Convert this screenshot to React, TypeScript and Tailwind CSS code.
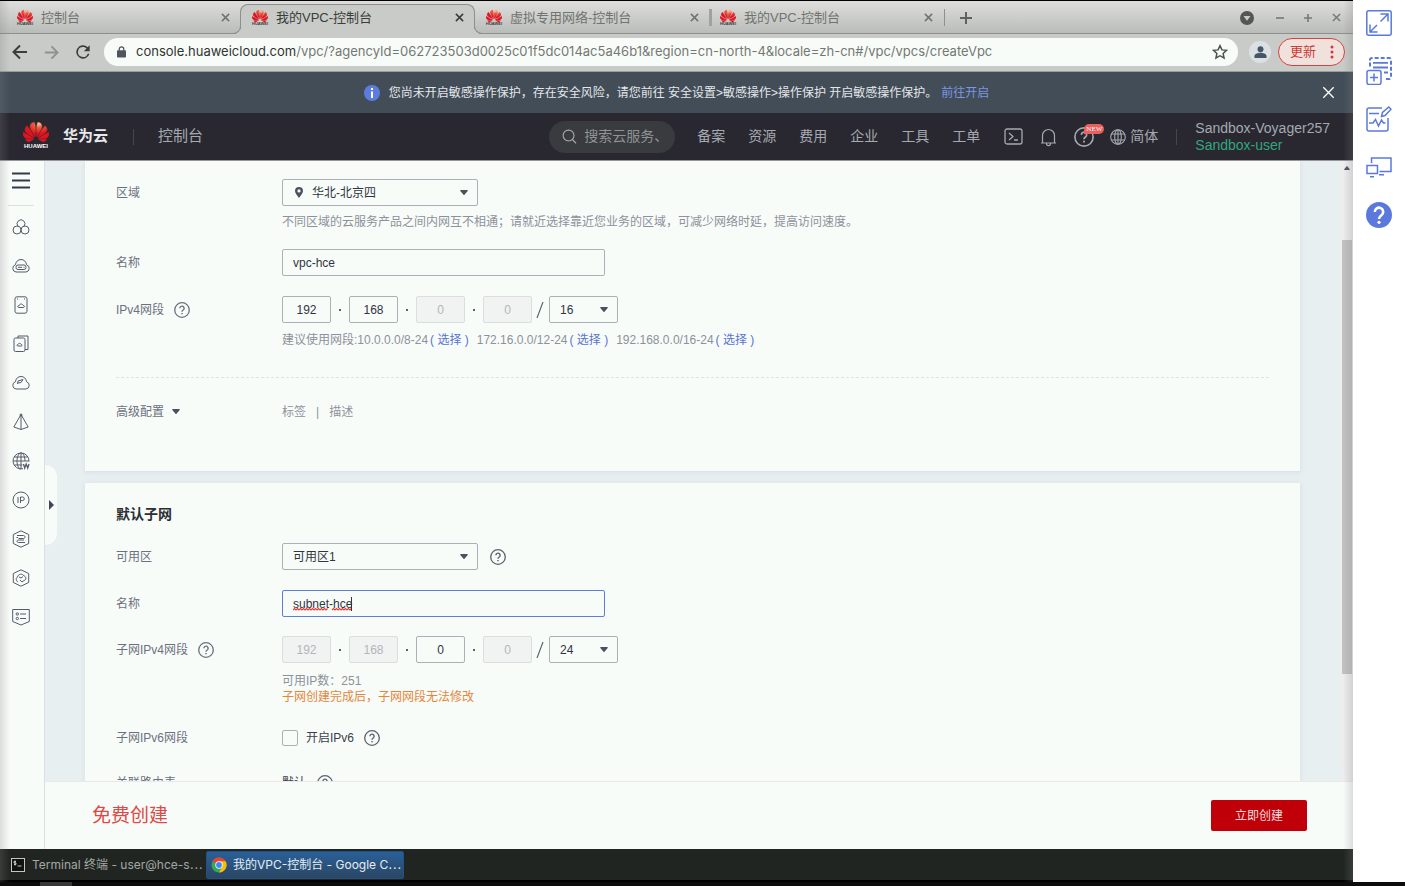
import React from "react";
import { SiHuawei } from "react-icons/si";

const inputBase =
  "h-[27px] rounded-[2px] border text-[12px] outline-none";

function Logo({ size }: { size: "sm" | "lg" }) {
  const large = size === "lg";
  return (
    <span className="flex shrink-0 flex-col items-center">
      <svg width="0" height="0" className="absolute">
        <defs>
          <radialGradient id={"petal-" + size} cx="0.6" cy="0.08" r="0.5">
            <stop offset="0" stopColor="#ffc49a" />
            <stop offset="0.4" stopColor="#ee5a40" />
            <stop offset="1" stopColor="#df1420" />
          </radialGradient>
        </defs>
      </svg>
      <SiHuawei
        fill={"url(#petal-" + size + ")"}
        stroke={"url(#petal-" + size + ")"}
        strokeWidth="0.3"
        className={large ? "h-[26px] w-[26px] -mt-1" : "h-4 w-4 -mt-[2px]"}
      />
      <span className={large ? "-mt-[2px] text-[6px] leading-[7px] font-bold text-white" : "-mt-[2px] text-[4px] leading-[4px] font-bold text-[#3a3a3a]"}>
        HUAWEI
      </span>
    </span>
  );
}

function Cross({ className, w = 1.7 }: { className: string; w?: number }) {
  return (
    <svg viewBox="0 0 10 10" className={className} fill="none" stroke="currentColor" strokeWidth={w}>
      <path d="M1 1 9 9M9 1 1 9" />
    </svg>
  );
}

function TabBody({ title }: { title: string }) {
  return (
    <>
      <Logo size="sm" />
      <span className="ml-2 flex-1 truncate">{title}</span>
      <button aria-label={"关闭 " + title} className="p-1">
        <Cross className="h-[9px] w-[9px]" />
      </button>
    </>
  );
}

function TabStrip() {
  return (
    <div className="flex h-[33px] shrink-0 items-stretch bg-linear-to-b from-[#dedfdd] to-[#b9bbb8] text-[13px] text-[#70736f] shadow-[inset_0_-1px_0_#8d908c]">
      <div className="flex w-60 min-w-0 items-center pr-[6px] pl-[17px]">
        <TabBody title="控制台" />
      </div>
      <div className="relative mt-[3px] flex w-[235px] min-w-0 items-center rounded-t-lg border border-b-0 border-[#8d908c] bg-[#c8cbc7] pr-[6px] pb-1 pl-[11px] text-[#3b3d3b] before:absolute before:bottom-0 before:-left-2 before:h-2 before:w-2 before:rounded-br-lg before:border-r before:border-b before:border-[#8d908c] before:shadow-[3px_3px_0_#c8cbc7] before:[clip-path:inset(0)] after:absolute after:-right-2 after:bottom-0 after:h-2 after:w-2 after:rounded-bl-lg after:border-b after:border-l after:border-[#8d908c] after:shadow-[-3px_3px_0_#c8cbc7] after:[clip-path:inset(0)]">
        <TabBody title="我的VPC-控制台" />
      </div>
      <div className="flex w-[234px] min-w-0 items-center pr-[6px] pl-[11px]">
        <TabBody title="虚拟专用网络-控制台" />
      </div>
      <span className="my-2 w-[3px] shrink-0 bg-[#9fa29e]" />
      <div className="flex w-[232px] min-w-0 items-center pr-[7px] pl-2">
        <TabBody title="我的VPC-控制台" />
      </div>
      <span className="my-2 w-px shrink-0 bg-[#8d908c]" />
      <button aria-label="新标签页" className="px-[15px]">
        <svg viewBox="0 0 12 12" className="h-3 w-3" stroke="#5f625f" strokeWidth="2">
          <path d="M6 0V12M0 6H12" />
        </svg>
      </button>
      <div className="ml-auto flex items-center pr-2 text-[#757874]">
        <button aria-label="搜索标签页" className="mr-[22px]">
          <svg viewBox="0 0 14 14" className="h-[14px] w-[14px]">
            <circle cx="7" cy="7" r="7" fill="#535653" />
            <path d="M3.5 5h7L7 9.8z" fill="#c9cbc8" />
          </svg>
        </button>
        <button aria-label="最小化" className="mr-5">
          <svg viewBox="0 0 8 8" className="h-2 w-2" stroke="currentColor" strokeWidth="1.6"><path d="M0 4H8" /></svg>
        </button>
        <button aria-label="最大化" className="mr-5">
          <svg viewBox="0 0 8 8" className="h-2 w-2" stroke="currentColor" strokeWidth="1.6"><path d="M0 4H8M4 0V8" /></svg>
        </button>
        <button aria-label="关闭窗口" className="mr-1">
          <Cross className="h-[9px] w-[9px]" w={1.6} />
        </button>
      </div>
    </div>
  );
}

function Toolbar() {
  return (
    <div className="flex h-[38px] shrink-0 items-center border-b border-[#9a9d99] bg-[#c8cbc7] pr-2 pb-px pl-3 text-[#3a3d3a]">
      <button aria-label="后退">
        <svg viewBox="0 0 16 16" className="h-4 w-4" fill="none" stroke="currentColor" strokeWidth="2"><path d="M15 8H2M8 1.5 1.5 8 8 14.500" /></svg>
      </button>
      <button aria-label="前进" className="ml-4 text-[#8f928f]">
        <svg viewBox="0 0 16 16" className="h-[15px] w-[15px]" fill="none" stroke="currentColor" strokeWidth="2"><path d="M1 8h13M8 1.500 14.500 8 8 14.500" /></svg>
      </button>
      <button aria-label="重新加载" className="mr-[11px] ml-[14px]">
        <svg viewBox="0 0 24 24" className="h-5 w-5" fill="currentColor"><path d="M17.650 6.350A8 8 0 1 0 19.730 14h-2.080A6 6 0 1 1 12 6c1.660 0 3.140.69 4.220 1.780L13 11h7V4z" /></svg>
      </button>
      <div className="flex h-7 min-w-0 flex-1 items-center rounded-full bg-[#f8fcf8] pr-[10px] pl-[13px]">
        <svg viewBox="0 0 10 13" className="h-[12px] w-[9px] shrink-0 text-[#50545c]">
          <rect x="0" y="4.500" width="10" height="8" rx="1" fill="currentColor" />
          <path d="M2.500 5V3.200a2.500 2.500 0 0 1 5 0V5" fill="none" stroke="currentColor" strokeWidth="1.400" />
        </svg>
        <span className="ml-[10px] flex-1 truncate font-['Inter','Noto_Sans_CJK_SC',sans-serif] text-[13px] text-[#747874]">
          <span className="text-[#303330]">console.huaweicloud.com</span>
          /vpc/?agencyId=062723503d0025c01f5dc014ac5a46b1&amp;region=cn-north-4&amp;locale=zh-cn#/vpc/vpcs/createVpc
        </span>
        <button aria-label="收藏">
          <svg viewBox="0 0 24 24" className="h-4 w-4" fill="none" stroke="#4c504c" strokeWidth="2.200"><path d="m12 2.500 2.900 6.300 6.900.7-5.100 4.700 1.400 6.800-6.100-3.400L5.900 21l1.400-6.800-5.100-4.700 6.900-.7z" /></svg>
        </button>
      </div>
      <button aria-label="用户" className="ml-[11px] flex h-[22px] w-[22px] items-center justify-center rounded-full bg-[#dbe1e2]">
        <svg viewBox="0 0 14 14" className="h-[13px] w-[13px]" fill="#475569"><circle cx="7" cy="3.500" r="3.200" /><path d="M0.500 13V11c0-2.500 4-3.600 6.500-3.600s6.500 1.100 6.500 3.600v2z" /></svg>
      </button>
      <button className="ml-[7px] flex h-7 w-[67px] items-center justify-between rounded-full border border-[#d5433c] bg-[#f0e1dd] pr-[10px] pl-[11px] text-[13px] text-[#ce3a34]">
        更新
        <svg viewBox="0 0 4 14" className="h-[14px] w-1" fill="currentColor"><circle cx="2" cy="2" r="1.500" /><circle cx="2" cy="7" r="1.500" /><circle cx="2" cy="12" r="1.500" /></svg>
      </button>
    </div>
  );
}

function Notice() {
  return (
    <div className="relative flex h-[41px] shrink-0 items-center justify-center bg-[#424d58] text-[12px] text-[#e4e7e9]">
      <svg viewBox="0 0 16 16" className="mr-[9px] h-4 w-4"><circle cx="8" cy="8" r="8" fill="#5c7ce0" /><path d="M8 3v2M8 6.500V13" stroke="#fff" strokeWidth="2" /></svg>
      <span>您尚未开启敏感操作保护，存在安全风险，请您前往 安全设置&gt;敏感操作&gt;操作保护 开启敏感操作保护。</span>
      <a href="#protect" className="ml-1 text-[#7d95e6]">前往开启</a>
      <button aria-label="关闭提示" className="absolute right-[18px] text-white">
        <Cross className="h-[13px] w-[13px]" w={1} />
      </button>
    </div>
  );
}

function Question({ className }: { className: string }) {
  return (
    <svg viewBox="0 0 16 16" className={className} fill="none" stroke="currentColor">
      <circle cx="8" cy="8" r="7.300" strokeWidth="1.300" />
      <path d="M5.900 6.300a2.100 2.100 0 1 1 3.300 1.700C8.400 8.500 8 8.800 8 9.800" strokeWidth="1.400" />
      <path d="M8 10.900v1.400" strokeWidth="1.500" />
    </svg>
  );
}

function Header() {
  return (
    <header className="flex h-12 shrink-0 items-center border-b border-[#98949c] bg-[#292830] pr-[23px] pl-[23px] text-[14px] text-[#a5a9b0]">
      <Logo size="lg" />
      <span className="ml-[14px] text-[15px] font-bold text-[#e8e9ec]">华为云</span>
      <span className="mr-6 ml-[25px] h-4 w-px bg-[#45464d]" />
      <a href="#console" className="text-[15px]">控制台</a>
      <nav className="ml-auto flex items-center whitespace-nowrap">
        <label className="flex h-8 w-[126px] items-center rounded-full bg-[#393b3e] pl-[13px]">
          <svg viewBox="0 0 16 16" className="h-[15px] w-[15px] shrink-0" fill="none" stroke="currentColor" strokeWidth="1.200"><circle cx="7" cy="7" r="5.800" /><path d="m11 11.200 4 4" /></svg>
          <input aria-label="搜索" placeholder="搜索云服务、" className="ml-[7px] w-20 bg-transparent outline-none placeholder:text-[#8f9396]" />
        </label>
        <div className="ml-[22px] flex gap-[23px]">
          <a href="#a">备案</a>
          <a href="#b">资源</a>
          <a href="#c">费用</a>
          <a href="#d">企业</a>
          <a href="#e">工具</a>
          <a href="#f">工单</a>
        </div>
        <button aria-label="命令行" className="ml-6">
          <svg viewBox="0 0 19 17" className="h-[17px] w-[19px]" fill="none" stroke="currentColor" strokeWidth="1.300"><rect x="1" y="1" width="17" height="15" rx="2" /><path d="m5 5 4 3.500L5 12M10 12h4" /></svg>
        </button>
        <button aria-label="消息" className="ml-[17px]">
          <svg viewBox="0 0 17 20" className="h-5 w-[17px]" fill="none" stroke="currentColor" strokeWidth="1.200"><path d="M1 16h15M2.500 16V8.500a6 6 0 0 1 12 0V16M6.500 16.500c0 2.800 4 2.800 4 0" /></svg>
        </button>
        <button aria-label="帮助" className="relative ml-[17px]">
          <Question className="h-5 w-5" />
          <span className="absolute -top-[3px] left-[10px] rounded-full rounded-bl-none bg-[#e9605c] px-[2px] font-['Liberation_Serif',serif] text-[7px] leading-[10px] text-white">NEW</span>
        </button>
        <button className="ml-4 flex items-center gap-1">
          <svg viewBox="0 0 16 16" className="h-4 w-4" fill="none" stroke="currentColor" strokeWidth="1.100"><circle cx="8" cy="8" r="7.300" /><ellipse cx="8" cy="8" rx="3.300" ry="7.300" /><path d="M8 .7v14.600M1.500 5h13M1.500 11h13" /></svg>
          简体
        </button>
        <span className="mr-[18px] ml-[18px] h-4 w-px bg-[#45464d]" />
        <span className="flex flex-col text-[14px] leading-[17px]">
          <span>Sandbox-Voyager257</span>
          <span className="text-[#32a67c]">Sandbox-user</span>
        </span>
      </nav>
    </header>
  );
}

const railIcons: { name: string; art: React.ReactNode }[] = [
  { name: "概览", art: <><path d="M6 8.200a3.900 3.900 0 1 1 6 0" /><circle cx="5" cy="12" r="4" /><circle cx="13" cy="12" r="4" /></> },
  { name: "云服务器", art: <><path d="M4 15a3.700 3.700 0 0 1-.6-7.200C4 4.500 6 2.500 9 2.500s5 2 5.600 5.300A3.700 3.700 0 0 1 14 15z" /><rect x="4" y="8" width="10" height="4.500" rx="2" /><path d="M6 10.300h4M11.500 10.300h1" /></> },
  { name: "裸金属", art: <><rect x="3" y="0.800" width="12" height="16.400" rx="2" /><path d="M6.500 11.500h5c1.500-.5 1-2-.3-2-.5-2-3.500-2-4 0-1.500 0-2 1.500-.7 2zM5 3h1M12 3h1" /></> },
  { name: "镜像", art: <><rect x="2" y="3" width="11" height="13.500" rx="1.500" /><path d="M6 3V1h10v13.500h-3M5.500 11h4c1-.4.8-1.500-.2-1.500-.5-1.500-3-1.500-3.300 0-1 0-1.300 1.100-.5 1.500z" /></> },
  { name: "云监控", art: <><path d="M4 15a3.700 3.700 0 0 1-.6-7.200C4 4.500 6 2.500 9 2.500s5 2 5.600 5.300A3.700 3.700 0 0 1 14 15z" /><path d="M5.500 10 6 7l5-1.500-2 3-3 .5" /></> },
  { name: "伸缩", art: <><path d="M9 1.500 1.800 14 9 16.500 16.200 14zM9 1.500v15" /><circle cx="9" cy="2" r="1" /></> },
  { name: "虚拟私有云", art: <><path d="M11 16.700A8 8 0 1 1 17 9.500" /><path d="M9 17c-2.200 0-4-3.600-4-8s1.800-8 4-8 4 3.600 4 8M9 1v16M1 9h16M2.500 5h13M2.500 13h8" /><path d="m11.500 12 1.200 4 1.500-4 1.500 4 1.300-4" strokeWidth="1.300" /></> },
  { name: "弹性公网IP", art: <><circle cx="9" cy="9" r="8" /><path d="M6 6v6M8.500 12V6h2a1.800 1.800 0 0 1 0 3.600h-2" /></> },
  { name: "负载均衡", art: <><path d="M9 .8 16.700 4.500v9L9 17.200 1.300 13.500v-9z" /><path d="M5 5.500h6.500c2 0 2 3 0 3h-5M13 12.500H6.500c-2 0-2-2.500 0-2.500H12M6 7.500H4.500" /></> },
  { name: "数据库", art: <><path d="M9 .8 16.700 4.500v9L9 17.200 1.300 13.500v-9z" /><path d="M6 13c-2-1-2.500-4-.5-5 .5-3 5-4 6.500-1 2.500.5 2.500 4 0 4.500L10 13 8 11M7 8l2 1 2-1.500" /></> },
  { name: "安全", art: <><path d="M.7 1.500h16.600v12L9 17 .7 13.500z" /><circle cx="5.300" cy="6" r="1.200" /><circle cx="5.300" cy="10.500" r="1.200" /><path d="M8 6h6M8 10.500h6" /></> },
];

function Rail() {
  return (
    <aside className="flex w-[45px] shrink-0 flex-col items-center border-r border-[#dadfe2] bg-[#f8fcf9] pr-[3px] text-[#555b6b]">
      <button aria-label="菜单" className="mt-[11px]">
        <svg viewBox="0 0 18 17" className="h-[17px] w-[18px]" stroke="#333b49" strokeWidth="2"><path d="M0 1.500h18M0 8.500h18M0 15.500h18" /></svg>
      </button>
      <span className="mt-4 h-px w-[26px] bg-[#dadfe2]" />
      <div className="mt-3 flex flex-col gap-[21px]">
        {railIcons.map((i) => (
          <button key={i.name} aria-label={i.name} className="h-[18px]">
            <svg viewBox="0 0 18 18" className="h-[18px] w-[18px]" fill="none" stroke="currentColor" strokeWidth="1">{i.art}</svg>
          </button>
        ))}
      </div>
    </aside>
  );
}

function Arrow({ className }: { className: string }) {
  return (
    <svg viewBox="0 0 8 5" className={className} fill="#4a5260"><path d="M.7 0h6.600a.6.6 0 0 1 .4 1L4.500 4.700a.7.7 0 0 1-1 0L.3 1A.6.6 0 0 1 .7 0z" /></svg>
  );
}

function Select({ id, label, value, wide, pin }: { id: string; label: string; value: string; wide?: boolean; pin?: boolean }) {
  return (
    <span className="relative inline-flex">
      <select
        id={id}
        aria-label={label}
        className={
          inputBase +
          " appearance-none border-[#adb0b8] bg-transparent text-[#2f3541] " +
          (wide ? "w-[196px] " : "w-[69px] ") +
          (pin ? "pl-[29px]" : "pl-[10px]")
        }
      >
        <option>{value}</option>
      </select>
      {pin && (
        <svg viewBox="0 0 8 11" className="pointer-events-none absolute top-2 left-[13px] h-[11px] w-2" fill="#4a5260" fillRule="evenodd"><path d="M4 0a4 4 0 0 1 4 4c0 2.500-2.500 4.500-4 7C2.500 8.500 0 6.500 0 4a4 4 0 0 1 4-4zm0 2.300a1.600 1.600 0 1 0 0 3.200 1.600 1.600 0 0 0 0-3.200z" /></svg>
      )}
      <Arrow className="pointer-events-none absolute top-[11px] right-[10px] h-[5px] w-2" />
    </span>
  );
}

function Row({ label, htmlFor, help, children }: { label: string; htmlFor?: string; help?: boolean; children: React.ReactNode }) {
  return (
    <div className="flex">
      <div className="flex h-[27px] w-[166px] shrink-0 items-center text-[#6c717d]">
        <label htmlFor={htmlFor}>{label}</label>
        {help && <button aria-label={label + "说明"} className="ml-[10px]"><Question className="h-4 w-4" /></button>}
      </div>
      <div className="min-w-0 flex-1">{children}</div>
    </div>
  );
}

function Cidr({ id, parts, mask }: { id: string; parts: { v: string; on: boolean }[]; mask: string }) {
  return (
    <div className="flex items-center">
      {parts.map((p, i) => (
        <React.Fragment key={i}>
          <input
            id={i === 0 ? id : undefined}
            aria-label={"网段第" + (i + 1) + "段"}
            defaultValue={p.v}
            disabled={!p.on}
            className={
              inputBase +
              " w-[49px] text-center " +
              (p.on ? "border-[#adb0b8] bg-transparent text-[#2f3541]" : "border-[#dadedf] bg-[#f0f3f1] text-[#b2b6bc]")
            }
          />
          {i < 3 ? (
            <span className="flex w-[18px] justify-center"><span className="h-[2px] w-[2px] bg-[#5b616d]" /></span>
          ) : (
            <svg viewBox="0 0 17 18" className="h-[18px] w-[17px]" stroke="#5b616d" strokeWidth="1.200"><path d="M11 1 5 17" /></svg>
          )}
        </React.Fragment>
      ))}
      <Select id={id + "-mask"} label="掩码" value={mask} />
    </div>
  );
}

function Pick() {
  return <button className="mr-2 ml-[2px] text-[#5873d3]">( 选择 )</button>;
}

const card = "bg-[#f8fcf9] px-[31px] shadow-[0_1px_4px_rgba(200,200,220,0.500)]";

function Form() {
  return (
    <main className="min-w-0 flex-1 overflow-hidden bg-[#e7eff0] pr-[41px] pl-10 text-[12px]">
      <section className={card + " h-[310px] pt-[18px]"}>
        <Row label="区域" htmlFor="region">
          <Select id="region" label="区域" value="华北-北京四" wide pin />
          <p className="mt-[7px] leading-[18px] text-[#8d919b]">不同区域的云服务产品之间内网互不相通；请就近选择靠近您业务的区域，可减少网络时延，提高访问速度。</p>
        </Row>
        <div className="mt-[18px]">
          <Row label="名称" htmlFor="vpc">
            <input id="vpc" defaultValue="vpc-hce" className={inputBase + " w-[323px] border-[#adb0b8] bg-transparent px-[10px] text-[#2f3541]"} />
          </Row>
        </div>
        <div className="mt-5">
          <Row label="IPv4网段" htmlFor="v4" help>
            <Cidr id="v4" mask="16" parts={[{ v: "192", on: true }, { v: "168", on: true }, { v: "0", on: false }, { v: "0", on: false }]} />
            <p className="mt-2 leading-[18px] whitespace-nowrap text-[#8d919b]">
              建议使用网段:10.0.0.0/8-24<Pick />172.16.0.0/12-24<Pick />192.168.0.0/16-24<Pick />
            </p>
          </Row>
        </div>
        <hr className="mt-7 border-dashed border-[#dfe4e3]" />
        <div className="mt-5">
          <Row label="高级配置">
            <div className="relative flex h-[27px] items-center text-[#8d919b]">
              <Arrow className="absolute -left-[110px] h-[5px] w-2" />
              标签<span className="mx-[10px]">|</span>描述
            </div>
          </Row>
        </div>
      </section>
      <section className={card + " mt-3 h-[400px] pt-[19px]"}>
        <h2 className="text-[14px] leading-6 font-bold text-[#2b2e33]">默认子网</h2>
        <div className="mt-[17px]">
          <Row label="可用区" htmlFor="az">
            <div className="flex items-center gap-3 text-[#5b616d]">
              <Select id="az" label="可用区" value="可用区1" wide />
              <button aria-label="可用区说明"><Question className="h-4 w-4" /></button>
            </div>
          </Row>
        </div>
        <div className="mt-5">
          <Row label="名称" htmlFor="subnet">
            <div className="relative">
              <input id="subnet" defaultValue="subnet-hce" spellCheck={false} className={inputBase + " block w-[323px] border-[#5e7ce0] bg-transparent px-[10px] text-[#2f3541]"} />
              <svg viewBox="0 0 60 16" className="pointer-events-none absolute top-[7px] left-[11px] h-4 w-[60px]" fill="none">
                <path d="M0 13l1.500-1.500 1.500 1.500 1.500-1.500 1.500 1.500 1.500-1.500 1.500 1.500 1.500-1.500 1.500 1.500 1.500-1.500 1.500 1.500 1.500-1.500 1.500 1.500 1.500-1.500 1.500 1.500 1.500-1.500 1.500 1.500 1.500-1.500 1.500 1.500 1.500-1.500 1.500 1.500 1.500-1.500 1.500 1.500 1.500-1.500M39 13l1.500-1.500 1.500 1.500 1.500-1.500 1.500 1.500 1.500-1.500 1.500 1.500 1.500-1.500 1.500 1.500 1.500-1.500 1.500 1.500 1.500-1.500 1.500 1.500 1.500-1.500" stroke="#f03a36" strokeWidth="1.200" />
                <path d="M58.500 0v14" stroke="#2f3541" />
              </svg>
            </div>
          </Row>
        </div>
        <div className="mt-[19px]">
          <Row label="子网IPv4网段" htmlFor="s4" help>
            <Cidr id="s4" mask="24" parts={[{ v: "192", on: false }, { v: "168", on: false }, { v: "0", on: true }, { v: "0", on: false }]} />
            <p className="mt-[10px] leading-4 text-[#8d919b]">可用IP数：251</p>
            <p className="leading-4 text-[#e5863a]">子网创建完成后，子网网段无法修改</p>
          </Row>
        </div>
        <div className="mt-[19px]">
          <Row label="子网IPv6网段">
            <div className="flex h-[27px] items-center text-[#5b616d]">
              <input id="v6" type="checkbox" className="h-4 w-4 appearance-none rounded-[2px] border border-[#adb0b8]" />
              <label htmlFor="v6" className="ml-2 text-[#3a404b]">开启IPv6</label>
              <button aria-label="IPv6说明" className="ml-[10px]"><Question className="h-4 w-4" /></button>
            </div>
          </Row>
        </div>
        <div className="mt-[18px]">
          <Row label="关联路由表">
            <div className="flex h-[27px] items-center text-[#5b616d]">
              <span className="text-[#3a404b]">默认</span>
              <button aria-label="路由表说明" className="ml-[11px]"><Question className="h-4 w-4" /></button>
            </div>
          </Row>
        </div>
      </section>
    </main>
  );
}

function Taskbar() {
  return (
    <div className="flex h-[33px] shrink-0 items-stretch border-b-2 border-black bg-[#202522] font-['Inter','Noto_Sans_CJK_SC',sans-serif] text-[12px]">
      <button className="flex w-[206px] items-center pt-px pl-[11px] whitespace-nowrap text-[#a4a8a5]">
        <svg viewBox="0 0 14 14" className="mr-[7px] h-[14px] w-[14px] shrink-0" fill="none" stroke="#c3c6c4"><rect x=".5" y=".5" width="13" height="13" fill="#111" /><path d="M5 3.500H3v1.500h2V6.500H3M4 2.500v5M6.500 8h4" /></svg>
        Terminal 终端 - user@hce-s⋯
      </button>
      <button className="my-px mt-[2px] flex w-[198px] items-center rounded-[2px] border border-[#1f5386] bg-linear-to-b from-[#2a6099] to-[#2a4664] pl-1 text-[#e6ecf2]">
        <svg viewBox="0 0 16 16" className="mr-[6px] h-4 w-4 shrink-0">
          <circle cx="8" cy="8" r="7.500" fill="#34a853" />
          <path d="M8 8 1.500 4.200A7.500 7.500 0 0 1 14.500 4.200z" fill="#ea4335" />
          <path d="M8 4.300h6.600A7.500 7.500 0 0 1 8 15.500l3.200-5.700z" fill="#fbbc05" />
          <circle cx="8" cy="8" r="3.700" fill="#fff" />
          <circle cx="8" cy="8" r="2.900" fill="#4285f4" />
        </svg>
        <span className="whitespace-nowrap">我的VPC-控制台 - Google C⋯</span>
      </button>
    </div>
  );
}

function ToolDock() {
  const icon = "h-[26px] w-[26px]";
  return (
    <aside className="flex w-[52px] shrink-0 flex-col items-center bg-white pt-[10px] text-[#5b79dc]">
      <button aria-label="全屏"><svg viewBox="0 0 26 26" className={icon} fill="none" stroke="currentColor" strokeWidth="1.500"><rect x=".8" y=".8" width="24.400" height="24.400" rx="2" /><path d="M14.500 4H22v7.500M22 4l-7.500 7.500M4 14.500V22h7.500M4 22l7-7" /></svg></button>
      <button aria-label="新建窗口" className="mt-[21px]"><svg viewBox="0 0 26 28" className="h-7 w-[26px]" fill="none" stroke="currentColor"><rect x="1" y="13.500" width="14" height="14" rx="2" strokeWidth="1.500" /><path d="M8 16.500v8M4 20.500h8" strokeWidth="1.500" /><path d="M4 9.500V3q0-2 2-2h17q2 0 2 2v17q0 2-2 2h-5" strokeWidth="2" strokeDasharray="4 2" /><path d="M7 5.800h15M7 10.500h15M18 15.500h4" strokeWidth="1.800" /></svg></button>
      <button aria-label="记录" className="mt-[21px]"><svg viewBox="0 0 26 26" className={icon} fill="none" stroke="currentColor" strokeWidth="1.500"><path d="M16 2H3Q1 2 1 4v19q0 2 2 2h17q2 0 2-2V12M3 7.500h10M3 17h4l2.500-3.500 3 6.500 3-6 2 3h2M15.500 10.500l1-4L22.800 1l2.200 2.200L19 9.500z" /></svg></button>
      <button aria-label="多屏" className="mt-6"><svg viewBox="0 0 26 22" className="h-[22px] w-[26px]" fill="none" stroke="currentColor" strokeWidth="1.500"><path d="M5.500 7V2H25v13.500H13.500" /><rect x="1" y="9.500" width="10.500" height="8" /><path d="M13 18.800h5M4 20.800h4" /></svg></button>
      <button aria-label="帮助中心" className="mt-6"><svg viewBox="0 0 26 26" className={icon}><circle cx="13" cy="13" r="13" fill="currentColor" /><path d="M8.800 10a4.200 4.200 0 1 1 6.600 3.300C13.600 14.500 13 15 13 17" fill="none" stroke="#fff" strokeWidth="2.600" /><circle cx="13" cy="20.300" r="1.600" fill="#fff" /></svg></button>
    </aside>
  );
}

export default function App() {
  return (
    <div className="flex h-screen flex-col overflow-hidden bg-[#0c0c0c] font-['Liberation_Sans','Noto_Sans_CJK_SC',sans-serif]">
      <div className="flex min-h-0 flex-1">
        <div className="relative flex min-w-0 flex-1 flex-col border-t border-black">
          <TabStrip />
          <Toolbar />
          <Notice />
          <Header />
          <div className="flex min-h-0 flex-1">
            <Rail />
            <div className="relative flex min-w-0 flex-1 flex-col">
              <div className="flex min-h-0 flex-1">
                <Form />
                <div className="flex w-3 shrink-0 flex-col items-center bg-[#ededee]">
                  <Arrow className="mt-[5px] mb-[70px] h-1 w-[6px] rotate-180" />
                  <span className="h-[70%] w-[10px] bg-[#c1c1c1]" />
                </div>
              </div>
              <footer className="flex h-[68px] shrink-0 items-center justify-between border-t border-[#eae8ea] bg-[#f8fcf9] pr-[46px] pl-[47px]">
                <span className="pt-[2px] text-[19px] text-[#dc4a47]">免费创建</span>
                <button className="h-[31px] w-24 rounded-[2px] bg-[#c00009] text-[12px] text-[#f7dcdc]">立即创建</button>
              </footer>
              <button aria-label="展开" className="absolute top-[304px] left-0 flex h-20 w-3 items-center justify-center rounded-r-xl bg-[#f8fcf9]">
                <svg viewBox="0 0 5 10" className="h-[10px] w-[5px]" fill="#3e4757"><path d="M0 0l5 5-5 5z" /></svg>
              </button>
            </div>
          </div>
          <Taskbar />
          <div className="pointer-events-none absolute inset-y-0 left-0 w-[10px] bg-linear-to-r from-[#808080]/25 to-transparent" />
          <div className="pointer-events-none absolute inset-y-0 right-0 w-[10px] bg-linear-to-l from-[#808080]/25 to-transparent" />
        </div>
        <ToolDock />
      </div>
      <div className="h-1 shrink-0 pl-10"><div className="h-full w-8 bg-[#383838]" /></div>
    </div>
  );
}
